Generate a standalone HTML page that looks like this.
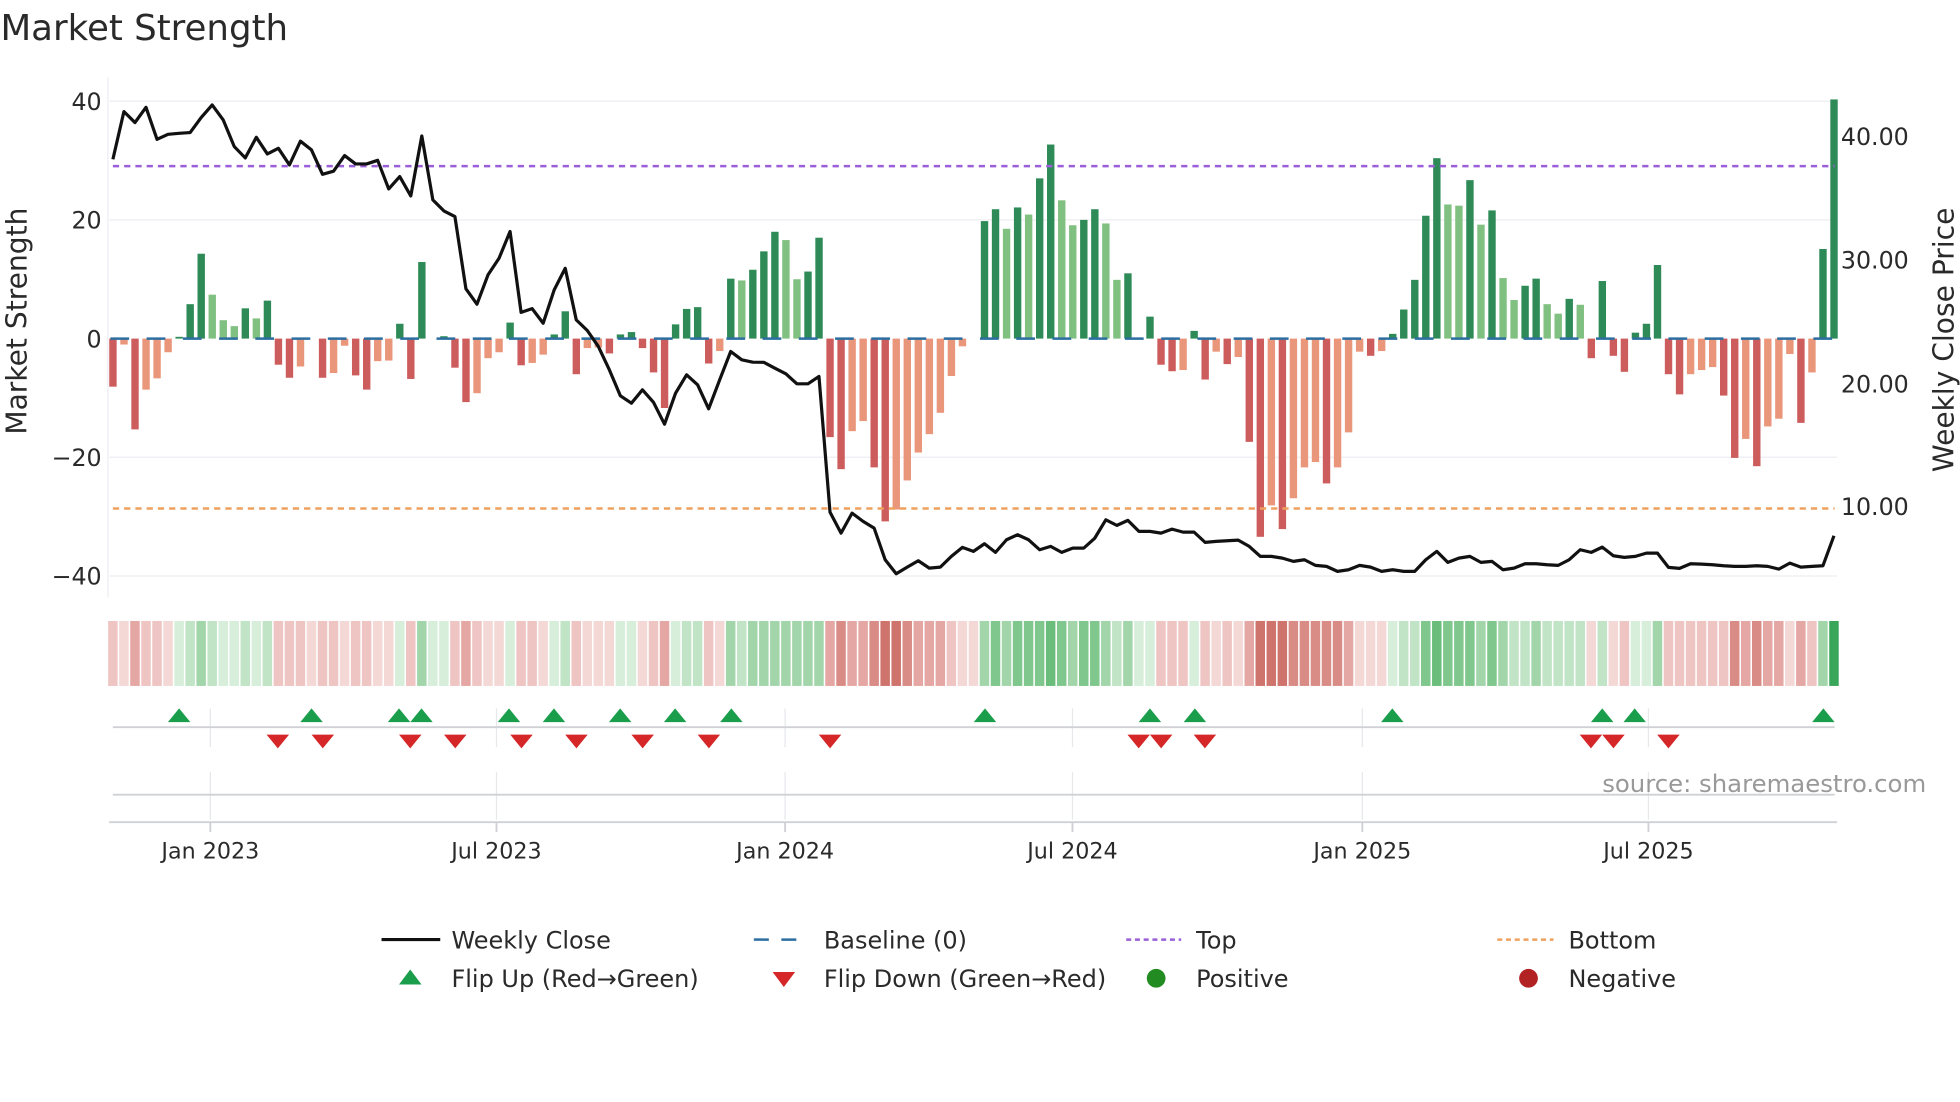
<!DOCTYPE html>
<html><head><meta charset="utf-8"><style>
html,body{margin:0;padding:0;background:#fff;width:1960px;height:1102px;overflow:hidden}
svg{display:block}
text{font-family:"DejaVu Sans","Liberation Sans",sans-serif;fill:#2a2a2a}
.dg{fill:#2e8b57}.lg{fill:#80c080}.dr{fill:#cd5c5c}.lr{fill:#e9967a}
.n1{fill:#f3d8d6}.n2{fill:#eec5c2}.n3{fill:#e4a7a3}.n4{fill:#d98b86}.n5{fill:#cf736d}
.p1{fill:#d6eeda}.p2{fill:#c0e4c5}.p3{fill:#a2d6aa}.p4{fill:#7fc78c}.p5{fill:#6abd7a}.p6{fill:#3aa65a}
</style></head><body>
<svg width="1960" height="1102" viewBox="0 0 1568 882" xmlns="http://www.w3.org/2000/svg">
<rect width="1568" height="882" fill="#fff"/>
<text x="0" y="32" font-size="28.5">Market Strength</text>
<g stroke="#eceef2" stroke-width="1">
<line x1="87" y1="81" x2="1470" y2="81"/><line x1="87" y1="176" x2="1470" y2="176"/>
<line x1="87" y1="366" x2="1470" y2="366"/><line x1="87" y1="461" x2="1470" y2="461"/>
<line x1="86" y1="62" x2="86" y2="478"/>
</g>
<g font-size="19" text-anchor="end">
<text x="81" y="88">40</text><text x="81" y="183">20</text><text x="81" y="278">0</text>
<text x="81" y="373">−20</text><text x="81" y="468">−40</text>
</g>
<g font-size="19">
<text x="1473" y="116">40.00</text><text x="1473" y="215">30.00</text>
<text x="1473" y="314">20.00</text><text x="1473" y="412">10.00</text>
</g>
<text transform="translate(21,257) rotate(-90)" font-size="22.5" text-anchor="middle">Market Strength</text>
<text transform="translate(1563,272) rotate(-90)" font-size="22.5" text-anchor="middle">Weekly Close Price</text>

<g transform="translate(90,271) scale(8.83,-4.75)">
<rect x="-0.33" y="-8.1" width=".67" height="8.1" class="dr"/>
<rect x="0.67" y="-1" width=".67" height="1" class="lr"/>
<rect x="1.67" y="-15.3" width=".67" height="15.3" class="dr"/>
<rect x="2.67" y="-8.6" width=".67" height="8.6" class="lr"/>
<rect x="3.67" y="-6.7" width=".67" height="6.7" class="lr"/>
<rect x="4.67" y="-2.3" width=".67" height="2.3" class="lr"/>
<rect x="5.67" y="0" width=".67" height="0.3" class="dg"/>
<rect x="6.67" y="0" width=".67" height="5.8" class="dg"/>
<rect x="7.67" y="0" width=".67" height="14.3" class="dg"/>
<rect x="8.67" y="0" width=".67" height="7.4" class="lg"/>
<rect x="9.67" y="0" width=".67" height="3.1" class="lg"/>
<rect x="10.67" y="0" width=".67" height="2.1" class="lg"/>
<rect x="11.67" y="0" width=".67" height="5.1" class="dg"/>
<rect x="12.67" y="0" width=".67" height="3.4" class="lg"/>
<rect x="13.67" y="0" width=".67" height="6.4" class="dg"/>
<rect x="14.67" y="-4.4" width=".67" height="4.4" class="dr"/>
<rect x="15.67" y="-6.6" width=".67" height="6.6" class="dr"/>
<rect x="16.67" y="-4.7" width=".67" height="4.7" class="lr"/>
<rect x="18.67" y="-6.6" width=".67" height="6.6" class="dr"/>
<rect x="19.67" y="-5.8" width=".67" height="5.8" class="lr"/>
<rect x="20.67" y="-1.2" width=".67" height="1.2" class="lr"/>
<rect x="21.67" y="-6.2" width=".67" height="6.2" class="dr"/>
<rect x="22.67" y="-8.6" width=".67" height="8.6" class="dr"/>
<rect x="23.67" y="-3.8" width=".67" height="3.8" class="lr"/>
<rect x="24.67" y="-3.7" width=".67" height="3.7" class="lr"/>
<rect x="25.67" y="0" width=".67" height="2.5" class="dg"/>
<rect x="26.67" y="-6.8" width=".67" height="6.8" class="dr"/>
<rect x="27.67" y="0" width=".67" height="12.9" class="dg"/>
<rect x="29.67" y="0" width=".67" height="0.4" class="dg"/>
<rect x="30.67" y="-4.9" width=".67" height="4.9" class="dr"/>
<rect x="31.67" y="-10.7" width=".67" height="10.7" class="dr"/>
<rect x="32.67" y="-9.2" width=".67" height="9.2" class="lr"/>
<rect x="33.67" y="-3.3" width=".67" height="3.3" class="lr"/>
<rect x="34.67" y="-2.3" width=".67" height="2.3" class="lr"/>
<rect x="35.67" y="0" width=".67" height="2.7" class="dg"/>
<rect x="36.67" y="-4.5" width=".67" height="4.5" class="dr"/>
<rect x="37.67" y="-4.1" width=".67" height="4.1" class="lr"/>
<rect x="38.67" y="-2.7" width=".67" height="2.7" class="lr"/>
<rect x="39.67" y="0" width=".67" height="0.7" class="dg"/>
<rect x="40.67" y="0" width=".67" height="4.6" class="dg"/>
<rect x="41.67" y="-6" width=".67" height="6" class="dr"/>
<rect x="42.67" y="-1.6" width=".67" height="1.6" class="lr"/>
<rect x="43.67" y="-1.5" width=".67" height="1.5" class="lr"/>
<rect x="44.67" y="-2.5" width=".67" height="2.5" class="dr"/>
<rect x="45.67" y="0" width=".67" height="0.7" class="dg"/>
<rect x="46.67" y="0" width=".67" height="1.1" class="dg"/>
<rect x="47.67" y="-1.6" width=".67" height="1.6" class="dr"/>
<rect x="48.67" y="-5.7" width=".67" height="5.7" class="dr"/>
<rect x="49.67" y="-11.7" width=".67" height="11.7" class="dr"/>
<rect x="50.67" y="0" width=".67" height="2.4" class="dg"/>
<rect x="51.67" y="0" width=".67" height="5" class="dg"/>
<rect x="52.67" y="0" width=".67" height="5.3" class="dg"/>
<rect x="53.67" y="-4.2" width=".67" height="4.2" class="dr"/>
<rect x="54.67" y="-2.1" width=".67" height="2.1" class="lr"/>
<rect x="55.67" y="0" width=".67" height="10.1" class="dg"/>
<rect x="56.67" y="0" width=".67" height="9.8" class="lg"/>
<rect x="57.67" y="0" width=".67" height="11.6" class="dg"/>
<rect x="58.67" y="0" width=".67" height="14.7" class="dg"/>
<rect x="59.67" y="0" width=".67" height="18" class="dg"/>
<rect x="60.67" y="0" width=".67" height="16.6" class="lg"/>
<rect x="61.67" y="0" width=".67" height="10" class="lg"/>
<rect x="62.67" y="0" width=".67" height="11.3" class="dg"/>
<rect x="63.67" y="0" width=".67" height="17" class="dg"/>
<rect x="64.67" y="-16.6" width=".67" height="16.6" class="dr"/>
<rect x="65.67" y="-22" width=".67" height="22" class="dr"/>
<rect x="66.67" y="-15.6" width=".67" height="15.6" class="lr"/>
<rect x="67.67" y="-13.9" width=".67" height="13.9" class="lr"/>
<rect x="68.67" y="-21.7" width=".67" height="21.7" class="dr"/>
<rect x="69.67" y="-30.8" width=".67" height="30.8" class="dr"/>
<rect x="70.67" y="-28.8" width=".67" height="28.8" class="lr"/>
<rect x="71.67" y="-23.9" width=".67" height="23.9" class="lr"/>
<rect x="72.67" y="-19.2" width=".67" height="19.2" class="lr"/>
<rect x="73.67" y="-16.1" width=".67" height="16.1" class="lr"/>
<rect x="74.67" y="-12.5" width=".67" height="12.5" class="lr"/>
<rect x="75.67" y="-6.3" width=".67" height="6.3" class="lr"/>
<rect x="76.67" y="-1.3" width=".67" height="1.3" class="lr"/>
<rect x="78.67" y="0" width=".67" height="19.8" class="dg"/>
<rect x="79.67" y="0" width=".67" height="21.8" class="dg"/>
<rect x="80.67" y="0" width=".67" height="18.5" class="lg"/>
<rect x="81.67" y="0" width=".67" height="22.1" class="dg"/>
<rect x="82.67" y="0" width=".67" height="20.9" class="lg"/>
<rect x="83.67" y="0" width=".67" height="27" class="dg"/>
<rect x="84.67" y="0" width=".67" height="32.7" class="dg"/>
<rect x="85.67" y="0" width=".67" height="23.3" class="lg"/>
<rect x="86.67" y="0" width=".67" height="19.1" class="lg"/>
<rect x="87.67" y="0" width=".67" height="20" class="dg"/>
<rect x="88.67" y="0" width=".67" height="21.8" class="dg"/>
<rect x="89.67" y="0" width=".67" height="19.4" class="lg"/>
<rect x="90.67" y="0" width=".67" height="9.9" class="lg"/>
<rect x="91.67" y="0" width=".67" height="11" class="dg"/>
<rect x="93.67" y="0" width=".67" height="3.7" class="dg"/>
<rect x="94.67" y="-4.4" width=".67" height="4.4" class="dr"/>
<rect x="95.67" y="-5.5" width=".67" height="5.5" class="dr"/>
<rect x="96.67" y="-5.3" width=".67" height="5.3" class="lr"/>
<rect x="97.67" y="0" width=".67" height="1.3" class="dg"/>
<rect x="98.67" y="-6.9" width=".67" height="6.9" class="dr"/>
<rect x="99.67" y="-2.2" width=".67" height="2.2" class="lr"/>
<rect x="100.67" y="-4.3" width=".67" height="4.3" class="dr"/>
<rect x="101.67" y="-3.1" width=".67" height="3.1" class="lr"/>
<rect x="102.67" y="-17.4" width=".67" height="17.4" class="dr"/>
<rect x="103.67" y="-33.4" width=".67" height="33.4" class="dr"/>
<rect x="104.67" y="-28.1" width=".67" height="28.1" class="lr"/>
<rect x="105.67" y="-32.1" width=".67" height="32.1" class="dr"/>
<rect x="106.67" y="-26.9" width=".67" height="26.9" class="lr"/>
<rect x="107.67" y="-21.7" width=".67" height="21.7" class="lr"/>
<rect x="108.67" y="-20.8" width=".67" height="20.8" class="lr"/>
<rect x="109.67" y="-24.4" width=".67" height="24.4" class="dr"/>
<rect x="110.67" y="-21.7" width=".67" height="21.7" class="lr"/>
<rect x="111.67" y="-15.8" width=".67" height="15.8" class="lr"/>
<rect x="112.67" y="-2.2" width=".67" height="2.2" class="lr"/>
<rect x="113.67" y="-2.9" width=".67" height="2.9" class="dr"/>
<rect x="114.67" y="-2.1" width=".67" height="2.1" class="lr"/>
<rect x="115.67" y="0" width=".67" height="0.8" class="dg"/>
<rect x="116.67" y="0" width=".67" height="4.9" class="dg"/>
<rect x="117.67" y="0" width=".67" height="9.9" class="dg"/>
<rect x="118.67" y="0" width=".67" height="20.7" class="dg"/>
<rect x="119.67" y="0" width=".67" height="30.4" class="dg"/>
<rect x="120.67" y="0" width=".67" height="22.6" class="lg"/>
<rect x="121.67" y="0" width=".67" height="22.4" class="lg"/>
<rect x="122.67" y="0" width=".67" height="26.7" class="dg"/>
<rect x="123.67" y="0" width=".67" height="19.2" class="lg"/>
<rect x="124.67" y="0" width=".67" height="21.6" class="dg"/>
<rect x="125.67" y="0" width=".67" height="10.2" class="lg"/>
<rect x="126.67" y="0" width=".67" height="6.5" class="lg"/>
<rect x="127.67" y="0" width=".67" height="8.9" class="dg"/>
<rect x="128.67" y="0" width=".67" height="10.1" class="dg"/>
<rect x="129.67" y="0" width=".67" height="5.8" class="lg"/>
<rect x="130.67" y="0" width=".67" height="4.2" class="lg"/>
<rect x="131.67" y="0" width=".67" height="6.7" class="dg"/>
<rect x="132.67" y="0" width=".67" height="5.7" class="lg"/>
<rect x="133.67" y="-3.3" width=".67" height="3.3" class="dr"/>
<rect x="134.67" y="0" width=".67" height="9.7" class="dg"/>
<rect x="135.67" y="-2.9" width=".67" height="2.9" class="dr"/>
<rect x="136.67" y="-5.6" width=".67" height="5.6" class="dr"/>
<rect x="137.67" y="0" width=".67" height="1" class="dg"/>
<rect x="138.67" y="0" width=".67" height="2.5" class="dg"/>
<rect x="139.67" y="0" width=".67" height="12.4" class="dg"/>
<rect x="140.67" y="-6" width=".67" height="6" class="dr"/>
<rect x="141.67" y="-9.4" width=".67" height="9.4" class="dr"/>
<rect x="142.67" y="-6" width=".67" height="6" class="lr"/>
<rect x="143.67" y="-5.3" width=".67" height="5.3" class="lr"/>
<rect x="144.67" y="-4.8" width=".67" height="4.8" class="lr"/>
<rect x="145.67" y="-9.6" width=".67" height="9.6" class="dr"/>
<rect x="146.67" y="-20.1" width=".67" height="20.1" class="dr"/>
<rect x="147.67" y="-16.9" width=".67" height="16.9" class="lr"/>
<rect x="148.67" y="-21.5" width=".67" height="21.5" class="dr"/>
<rect x="149.67" y="-14.8" width=".67" height="14.8" class="lr"/>
<rect x="150.67" y="-13.5" width=".67" height="13.5" class="lr"/>
<rect x="151.67" y="-2.6" width=".67" height="2.6" class="lr"/>
<rect x="152.67" y="-14.2" width=".67" height="14.2" class="dr"/>
<rect x="153.67" y="-5.7" width=".67" height="5.7" class="lr"/>
<rect x="154.67" y="0" width=".67" height="15.1" class="dg"/>
<rect x="155.67" y="0" width=".67" height="40.3" class="dg"/>
</g>
<line x1="88" y1="271" x2="1468" y2="271" stroke="#2c6ea0" stroke-width="2" stroke-dasharray="15 14"/>
<line x1="90" y1="133" x2="1468" y2="133" stroke="#9a5fd8" stroke-width="2" stroke-dasharray="5 4"/>
<line x1="90" y1="407" x2="1468" y2="407" stroke="#eea05f" stroke-width="2" stroke-dasharray="5 4"/>

<g transform="translate(90,0) scale(8.83,1)">
<polyline fill="none" stroke="#111" stroke-width="3.2" stroke-linejoin="round" vector-effect="non-scaling-stroke" points="0,127.5 1,89.3 2,98.1 3,85.9 4,111.5 5,107.5 6,106.7 7,106.1 8,94.1 9,84 10,96 11,117.3 12,126.4 13,109.9 14,123.2 15,118.7 16,132 17,113 18,120 19,139.5 20,137 21,124.5 22,131.2 23,131.2 24,128.3 25,151.2 26,141.3 27,156.8 28,108.8 29,160 30,168.8 31,173.3 32,231.2 33,243.5 34,220 35,206.7 36,185.3 37,250 38,247 39,258.7 40,232 41,214.7 42,256 43,264.5 44,277.3 45,296 46,316.8 47,322.7 48,312 49,322 50,339.5 51,314.7 52,300 53,308 54,327.2 55,304 56,281.3 57,288 58,289.9 59,290 60,294.7 61,299.2 62,307.2 63,307.2 64,301.3 65,409.9 66,426.7 67,410.7 68,417.3 69,422.7 70,448 71,459.2 72,453.9 73,448.8 74,454.7 75,453.9 76,445.3 77,438.1 78,441.3 79,435.2 80,442.1 81,432 82,428 83,432 84,440 85,437.3 86,442.1 87,438.7 88,438.7 89,430.7 90,416 91,420.5 92,416.5 93,425.3 94,425.3 95,426.7 96,423.5 97,425.9 98,425.9 99,434.1 100,433.3 101,432.8 102,432.3 103,437.3 104,445.3 105,445.3 106,446.7 107,449.3 108,448 109,452.5 110,453.3 111,457.3 112,456 113,452.5 114,453.9 115,457.3 116,456 117,457.3 118,457.3 119,448 120,441.3 121,450.1 122,446.7 123,445.3 124,450.1 125,449.3 126,456 127,454.7 128,451.2 129,451.2 130,452 131,452.5 132,448 133,440 134,442.1 135,437.9 136,444.8 137,446.1 138,445.3 139,442.7 140,442.7 141,454.1 142,454.9 143,451.2 144,451.5 145,452 146,452.8 147,453.3 148,453.3 149,452.8 150,453.3 151,455.5 152,450.7 153,453.9 154,453.3 155,452.8 156,428.8"/>
</g>

<g transform="translate(90,497) scale(8.83,1)">
<rect x="-0.43" y="0" width=".86" height="52" class="n2"/>
<rect x="0.57" y="0" width=".86" height="52" class="n1"/>
<rect x="1.57" y="0" width=".86" height="52" class="n3"/>
<rect x="2.57" y="0" width=".86" height="52" class="n2"/>
<rect x="3.57" y="0" width=".86" height="52" class="n2"/>
<rect x="4.57" y="0" width=".86" height="52" class="n1"/>
<rect x="5.57" y="0" width=".86" height="52" class="p1"/>
<rect x="6.57" y="0" width=".86" height="52" class="p2"/>
<rect x="7.57" y="0" width=".86" height="52" class="p3"/>
<rect x="8.57" y="0" width=".86" height="52" class="p2"/>
<rect x="9.57" y="0" width=".86" height="52" class="p1"/>
<rect x="10.57" y="0" width=".86" height="52" class="p1"/>
<rect x="11.57" y="0" width=".86" height="52" class="p2"/>
<rect x="12.57" y="0" width=".86" height="52" class="p1"/>
<rect x="13.57" y="0" width=".86" height="52" class="p2"/>
<rect x="14.57" y="0" width=".86" height="52" class="n2"/>
<rect x="15.57" y="0" width=".86" height="52" class="n2"/>
<rect x="16.57" y="0" width=".86" height="52" class="n2"/>
<rect x="17.57" y="0" width=".86" height="52" class="n1"/>
<rect x="18.57" y="0" width=".86" height="52" class="n2"/>
<rect x="19.57" y="0" width=".86" height="52" class="n2"/>
<rect x="20.57" y="0" width=".86" height="52" class="n1"/>
<rect x="21.57" y="0" width=".86" height="52" class="n2"/>
<rect x="22.57" y="0" width=".86" height="52" class="n2"/>
<rect x="23.57" y="0" width=".86" height="52" class="n1"/>
<rect x="24.57" y="0" width=".86" height="52" class="n1"/>
<rect x="25.57" y="0" width=".86" height="52" class="p1"/>
<rect x="26.57" y="0" width=".86" height="52" class="n2"/>
<rect x="27.57" y="0" width=".86" height="52" class="p3"/>
<rect x="28.57" y="0" width=".86" height="52" class="p1"/>
<rect x="29.57" y="0" width=".86" height="52" class="p1"/>
<rect x="30.57" y="0" width=".86" height="52" class="n2"/>
<rect x="31.57" y="0" width=".86" height="52" class="n3"/>
<rect x="32.57" y="0" width=".86" height="52" class="n2"/>
<rect x="33.57" y="0" width=".86" height="52" class="n1"/>
<rect x="34.57" y="0" width=".86" height="52" class="n1"/>
<rect x="35.57" y="0" width=".86" height="52" class="p1"/>
<rect x="36.57" y="0" width=".86" height="52" class="n2"/>
<rect x="37.57" y="0" width=".86" height="52" class="n2"/>
<rect x="38.57" y="0" width=".86" height="52" class="n1"/>
<rect x="39.57" y="0" width=".86" height="52" class="p1"/>
<rect x="40.57" y="0" width=".86" height="52" class="p2"/>
<rect x="41.57" y="0" width=".86" height="52" class="n2"/>
<rect x="42.57" y="0" width=".86" height="52" class="n1"/>
<rect x="43.57" y="0" width=".86" height="52" class="n1"/>
<rect x="44.57" y="0" width=".86" height="52" class="n1"/>
<rect x="45.57" y="0" width=".86" height="52" class="p1"/>
<rect x="46.57" y="0" width=".86" height="52" class="p1"/>
<rect x="47.57" y="0" width=".86" height="52" class="n1"/>
<rect x="48.57" y="0" width=".86" height="52" class="n2"/>
<rect x="49.57" y="0" width=".86" height="52" class="n3"/>
<rect x="50.57" y="0" width=".86" height="52" class="p1"/>
<rect x="51.57" y="0" width=".86" height="52" class="p2"/>
<rect x="52.57" y="0" width=".86" height="52" class="p2"/>
<rect x="53.57" y="0" width=".86" height="52" class="n2"/>
<rect x="54.57" y="0" width=".86" height="52" class="n1"/>
<rect x="55.57" y="0" width=".86" height="52" class="p3"/>
<rect x="56.57" y="0" width=".86" height="52" class="p2"/>
<rect x="57.57" y="0" width=".86" height="52" class="p3"/>
<rect x="58.57" y="0" width=".86" height="52" class="p3"/>
<rect x="59.57" y="0" width=".86" height="52" class="p3"/>
<rect x="60.57" y="0" width=".86" height="52" class="p3"/>
<rect x="61.57" y="0" width=".86" height="52" class="p3"/>
<rect x="62.57" y="0" width=".86" height="52" class="p3"/>
<rect x="63.57" y="0" width=".86" height="52" class="p3"/>
<rect x="64.57" y="0" width=".86" height="52" class="n3"/>
<rect x="65.57" y="0" width=".86" height="52" class="n4"/>
<rect x="66.57" y="0" width=".86" height="52" class="n3"/>
<rect x="67.57" y="0" width=".86" height="52" class="n3"/>
<rect x="68.57" y="0" width=".86" height="52" class="n4"/>
<rect x="69.57" y="0" width=".86" height="52" class="n5"/>
<rect x="70.57" y="0" width=".86" height="52" class="n5"/>
<rect x="71.57" y="0" width=".86" height="52" class="n4"/>
<rect x="72.57" y="0" width=".86" height="52" class="n3"/>
<rect x="73.57" y="0" width=".86" height="52" class="n3"/>
<rect x="74.57" y="0" width=".86" height="52" class="n3"/>
<rect x="75.57" y="0" width=".86" height="52" class="n2"/>
<rect x="76.57" y="0" width=".86" height="52" class="n1"/>
<rect x="77.57" y="0" width=".86" height="52" class="n1"/>
<rect x="78.57" y="0" width=".86" height="52" class="p3"/>
<rect x="79.57" y="0" width=".86" height="52" class="p4"/>
<rect x="80.57" y="0" width=".86" height="52" class="p3"/>
<rect x="81.57" y="0" width=".86" height="52" class="p4"/>
<rect x="82.57" y="0" width=".86" height="52" class="p4"/>
<rect x="83.57" y="0" width=".86" height="52" class="p4"/>
<rect x="84.57" y="0" width=".86" height="52" class="p5"/>
<rect x="85.57" y="0" width=".86" height="52" class="p4"/>
<rect x="86.57" y="0" width=".86" height="52" class="p3"/>
<rect x="87.57" y="0" width=".86" height="52" class="p4"/>
<rect x="88.57" y="0" width=".86" height="52" class="p4"/>
<rect x="89.57" y="0" width=".86" height="52" class="p3"/>
<rect x="90.57" y="0" width=".86" height="52" class="p2"/>
<rect x="91.57" y="0" width=".86" height="52" class="p3"/>
<rect x="92.57" y="0" width=".86" height="52" class="p1"/>
<rect x="93.57" y="0" width=".86" height="52" class="p1"/>
<rect x="94.57" y="0" width=".86" height="52" class="n2"/>
<rect x="95.57" y="0" width=".86" height="52" class="n2"/>
<rect x="96.57" y="0" width=".86" height="52" class="n2"/>
<rect x="97.57" y="0" width=".86" height="52" class="p1"/>
<rect x="98.57" y="0" width=".86" height="52" class="n2"/>
<rect x="99.57" y="0" width=".86" height="52" class="n1"/>
<rect x="100.57" y="0" width=".86" height="52" class="n2"/>
<rect x="101.57" y="0" width=".86" height="52" class="n1"/>
<rect x="102.57" y="0" width=".86" height="52" class="n3"/>
<rect x="103.57" y="0" width=".86" height="52" class="n5"/>
<rect x="104.57" y="0" width=".86" height="52" class="n5"/>
<rect x="105.57" y="0" width=".86" height="52" class="n5"/>
<rect x="106.57" y="0" width=".86" height="52" class="n4"/>
<rect x="107.57" y="0" width=".86" height="52" class="n4"/>
<rect x="108.57" y="0" width=".86" height="52" class="n4"/>
<rect x="109.57" y="0" width=".86" height="52" class="n4"/>
<rect x="110.57" y="0" width=".86" height="52" class="n4"/>
<rect x="111.57" y="0" width=".86" height="52" class="n3"/>
<rect x="112.57" y="0" width=".86" height="52" class="n1"/>
<rect x="113.57" y="0" width=".86" height="52" class="n1"/>
<rect x="114.57" y="0" width=".86" height="52" class="n1"/>
<rect x="115.57" y="0" width=".86" height="52" class="p1"/>
<rect x="116.57" y="0" width=".86" height="52" class="p2"/>
<rect x="117.57" y="0" width=".86" height="52" class="p2"/>
<rect x="118.57" y="0" width=".86" height="52" class="p4"/>
<rect x="119.57" y="0" width=".86" height="52" class="p5"/>
<rect x="120.57" y="0" width=".86" height="52" class="p4"/>
<rect x="121.57" y="0" width=".86" height="52" class="p4"/>
<rect x="122.57" y="0" width=".86" height="52" class="p4"/>
<rect x="123.57" y="0" width=".86" height="52" class="p3"/>
<rect x="124.57" y="0" width=".86" height="52" class="p4"/>
<rect x="125.57" y="0" width=".86" height="52" class="p3"/>
<rect x="126.57" y="0" width=".86" height="52" class="p2"/>
<rect x="127.57" y="0" width=".86" height="52" class="p2"/>
<rect x="128.57" y="0" width=".86" height="52" class="p3"/>
<rect x="129.57" y="0" width=".86" height="52" class="p2"/>
<rect x="130.57" y="0" width=".86" height="52" class="p2"/>
<rect x="131.57" y="0" width=".86" height="52" class="p2"/>
<rect x="132.57" y="0" width=".86" height="52" class="p2"/>
<rect x="133.57" y="0" width=".86" height="52" class="n1"/>
<rect x="134.57" y="0" width=".86" height="52" class="p2"/>
<rect x="135.57" y="0" width=".86" height="52" class="n1"/>
<rect x="136.57" y="0" width=".86" height="52" class="n2"/>
<rect x="137.57" y="0" width=".86" height="52" class="p1"/>
<rect x="138.57" y="0" width=".86" height="52" class="p1"/>
<rect x="139.57" y="0" width=".86" height="52" class="p3"/>
<rect x="140.57" y="0" width=".86" height="52" class="n2"/>
<rect x="141.57" y="0" width=".86" height="52" class="n2"/>
<rect x="142.57" y="0" width=".86" height="52" class="n2"/>
<rect x="143.57" y="0" width=".86" height="52" class="n2"/>
<rect x="144.57" y="0" width=".86" height="52" class="n2"/>
<rect x="145.57" y="0" width=".86" height="52" class="n2"/>
<rect x="146.57" y="0" width=".86" height="52" class="n4"/>
<rect x="147.57" y="0" width=".86" height="52" class="n3"/>
<rect x="148.57" y="0" width=".86" height="52" class="n4"/>
<rect x="149.57" y="0" width=".86" height="52" class="n3"/>
<rect x="150.57" y="0" width=".86" height="52" class="n3"/>
<rect x="151.57" y="0" width=".86" height="52" class="n1"/>
<rect x="152.57" y="0" width=".86" height="52" class="n3"/>
<rect x="153.57" y="0" width=".86" height="52" class="n2"/>
<rect x="154.57" y="0" width=".86" height="52" class="p3"/>
<rect x="155.57" y="0" width=".86" height="52" class="p6"/>
</g>

<g stroke="#e6e8ec" stroke-width="1">
<line x1="168" y1="567" x2="168" y2="598"/><line x1="397" y1="567" x2="397" y2="598"/><line x1="628" y1="567" x2="628" y2="598"/><line x1="858" y1="567" x2="858" y2="598"/><line x1="1090" y1="567" x2="1090" y2="598"/><line x1="1319" y1="567" x2="1319" y2="598"/>
<line x1="168" y1="618" x2="168" y2="656"/><line x1="397" y1="618" x2="397" y2="656"/><line x1="628" y1="618" x2="628" y2="656"/><line x1="858" y1="618" x2="858" y2="656"/><line x1="1090" y1="618" x2="1090" y2="656"/><line x1="1319" y1="618" x2="1319" y2="656"/>
</g>
<line x1="90" y1="582" x2="1468" y2="582" stroke="#cfd1d5" stroke-width="1.5"/>
<line x1="90" y1="636" x2="1468" y2="636" stroke="#cfd1d5" stroke-width="1.5"/>
<line x1="87" y1="658" x2="1470" y2="658" stroke="#cfd1d5" stroke-width="1.5"/>
<g stroke="#cfd1d5" stroke-width="1.5">
<line x1="168" y1="658" x2="168" y2="666"/><line x1="397" y1="658" x2="397" y2="666"/><line x1="628" y1="658" x2="628" y2="666"/><line x1="858" y1="658" x2="858" y2="666"/><line x1="1090" y1="658" x2="1090" y2="666"/><line x1="1319" y1="658" x2="1319" y2="666"/>
</g>
<g fill="#1a9e4b">
<polygon points="134,578 152,578 143,567"/><polygon points="240,578 258,578 249,567"/><polygon points="310,578 328,578 319,567"/><polygon points="328,578 346,578 337,567"/><polygon points="398,578 416,578 407,567"/><polygon points="434,578 452,578 443,567"/><polygon points="487,578 505,578 496,567"/><polygon points="531,578 549,578 540,567"/><polygon points="576,578 594,578 585,567"/><polygon points="779,578 797,578 788,567"/><polygon points="911,578 929,578 920,567"/><polygon points="947,578 965,578 956,567"/><polygon points="1105,578 1123,578 1114,567"/><polygon points="1273,578 1291,578 1282,567"/><polygon points="1299,578 1317,578 1308,567"/><polygon points="1450,578 1468,578 1459,567"/>
</g>
<g fill="#d62728">
<polygon points="213,588 231,588 222,599"/><polygon points="249,588 267,588 258,599"/><polygon points="319,588 337,588 328,599"/><polygon points="355,588 373,588 364,599"/><polygon points="408,588 426,588 417,599"/><polygon points="452,588 470,588 461,599"/><polygon points="505,588 523,588 514,599"/><polygon points="558,588 576,588 567,599"/><polygon points="655,588 673,588 664,599"/><polygon points="902,588 920,588 911,599"/><polygon points="920,588 938,588 929,599"/><polygon points="955,588 973,588 964,599"/><polygon points="1264,588 1282,588 1273,599"/><polygon points="1282,588 1300,588 1291,599"/><polygon points="1326,588 1344,588 1335,599"/>
</g>
<text x="1282" y="634" font-size="19.5" style="fill:#999">source: sharemaestro.com</text>
<g font-size="17.8" text-anchor="middle">
<text x="168" y="687">Jan 2023</text><text x="397" y="687">Jul 2023</text><text x="628" y="687">Jan 2024</text>
<text x="858" y="687">Jul 2024</text><text x="1090" y="687">Jan 2025</text><text x="1319" y="687">Jul 2025</text>
</g>
<g font-size="19.2">
<line x1="305" y1="752" x2="352" y2="752" stroke="#111" stroke-width="2.5"/>
<text x="361" y="759">Weekly Close</text>
<line x1="603" y1="752" x2="646" y2="752" stroke="#2c6ea0" stroke-width="2" stroke-dasharray="12 10"/>
<text x="659" y="759">Baseline (0)</text>
<line x1="901" y1="752" x2="945" y2="752" stroke="#9a5fd8" stroke-width="2" stroke-dasharray="4 3"/>
<text x="957" y="759">Top</text>
<line x1="1198" y1="752" x2="1243" y2="752" stroke="#eea05f" stroke-width="2" stroke-dasharray="4 3"/>
<text x="1255" y="759">Bottom</text>
<polygon points="319,788 337,788 328,776" fill="#1a9e4b"/>
<text x="361" y="790">Flip Up (Red→Green)</text>
<polygon points="618,778 636,778 627,790" fill="#d62728"/>
<text x="659" y="790">Flip Down (Green→Red)</text>
<circle cx="925" cy="783" r="7.5" fill="#228b22"/>
<text x="957" y="790">Positive</text>
<circle cx="1223" cy="783" r="7.5" fill="#b22222"/>
<text x="1255" y="790">Negative</text>
</g>
</svg>
</body></html>
